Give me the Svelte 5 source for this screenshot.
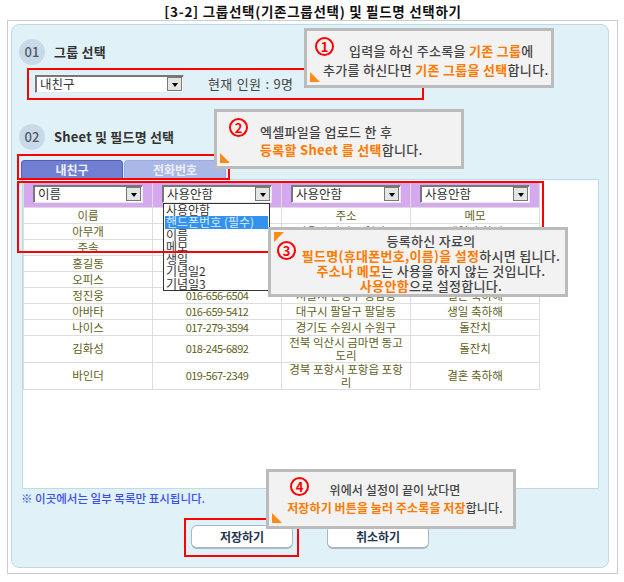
<script>
	const rows = [
		{ name: '이름', phone: '휴대폰번호', addr: '주소', memo: '메모' },
		{ name: '아무개', phone: '010-123-4567', addr: '서울시 강남구 역삼동', memo: '생일 축하해' },
		{ name: '주속', phone: '011-234-5678', addr: '서울시 서초구 서초동', memo: '돌잔치' },
		{ name: '홍길동', phone: '011-345-6789', addr: '부산시 해운대구 우동', memo: '결혼 축하해' },
		{ name: '오피스', phone: '016-456-7890', addr: '인천시 남동구 구월동', memo: '돌잔치' },
		{ name: '정진웅', phone: '016-656-6504', addr: '서울시 은평구 응암동', memo: '결혼 축하해' },
		{ name: '아바타', phone: '016-659-5412', addr: '대구시 팔달구 팔달동', memo: '생일 축하해' },
		{ name: '나이스', phone: '017-279-3594', addr: '경기도 수원시 수원구', memo: '돌잔치' },
		{ name: '김화성', phone: '018-245-6892', addr: '전북 익산시 금마면 동고도리', memo: '돌잔치' },
		{ name: '바인더', phone: '019-567-2349', addr: '경북 포항시 포항읍 포항리', memo: '결혼 축하해' }
	];

	const fields = ['이름', '사용안함', '사용안함', '사용안함'];
	const options = ['사용안함', '핸드폰번호 (필수)', '이름', '메모', '생일', '기념일2', '기념일3'];
</script>

{#snippet selectBox(label)}
	<div class="select">
		<span class="select-label">{label}</span>
		<span class="select-arrow"><i></i></span>
	</div>
{/snippet}

<div class="page">
	<h1 class="title">[3-2] 그룹선택(기존그룹선택) 및 필드명 선택하기</h1>

	<div class="frame">
		<div class="panel">
			<div class="heading">
				<span class="step">01</span>
				<span class="heading-text">그룹 선택</span>
			</div>
			<div class="group-row">
				<div class="group-select">{@render selectBox('내친구')}</div>
				<span class="count">현재 인원 : 9명</span>
			</div>

			<div class="heading second">
				<span class="step">02</span>
				<span class="heading-text">Sheet 및 필드명 선택</span>
			</div>
			<div class="tabs">
				<div class="tab active">내친구</div>
				<div class="tab">전화번호</div>
			</div>
			<div class="sheet">
				<table>
					<thead>
						<tr>
							{#each fields as field}
								<th>{@render selectBox(field)}</th>
							{/each}
						</tr>
					</thead>
					<tbody>
						{#each rows as row}
							<tr>
								<td>{row.name}</td>
								<td class="phone">{row.phone}</td>
								<td class="addr">{row.addr}</td>
								<td>{row.memo}</td>
							</tr>
						{/each}
					</tbody>
				</table>
			</div>
			<p class="note">※ 이곳에서는 일부 목록만 표시됩니다.</p>
			<div class="buttons">
				<button>저장하기</button>
				<button>취소하기</button>
			</div>
		</div>
	</div>

	<!-- dropdown opened over the table -->
	<ul class="dropdown">
		{#each options as option, i}
			<li class:selected={i === 1}>{option}</li>
		{/each}
	</ul>

	<!-- red highlight boxes -->
	<div class="mark mark1"></div>
	<div class="mark mark2"></div>
	<div class="mark mark3"></div>
	<div class="mark mark4"></div>

	<!-- callouts -->
	<div class="callout c1">
		<span class="num">1</span>
		<span class="corner"></span>
		<p class="l1">입력을 하신 주소록을 <b>기존 그룹</b>에</p>
		<p class="l2">추가를 하신다면 <b>기존 그룹을 선택</b>합니다.</p>
	</div>
	<div class="callout c2">
		<span class="num">2</span>
		<span class="corner"></span>
		<p>엑셀파일을 업로드 한 후</p>
		<p><b>등록할 Sheet 를 선택</b>합니다.</p>
	</div>
	<div class="callout c3">
		<span class="num">3</span>
		<span class="corner top"></span>
		<p>등록하신 자료의</p>
		<p><b>필드명(휴대폰번호,이름)을 설정</b>하시면 됩니다.</p>
		<p><b>주소나 메모</b>는 사용을 하지 않는 것입니다.</p>
		<p><b>사용안함</b>으로 설정합니다.</p>
	</div>
	<div class="callout c4">
		<span class="num">4</span>
		<span class="corner"></span>
		<p>위에서 설정이 끝이 났다면</p>
		<p><b>저장하기 버튼을 눌러 주소록을 저장</b>합니다.</p>
	</div>
</div>

<style>
	:global(body) {
		margin: 0;
		background: #fff;
	}

	.page {
		position: relative;
		width: 624px;
		height: 582px;
		overflow: hidden;
		font-family: 'Noto Sans CJK KR', 'Noto Sans', sans-serif;
		font-size: 12px;
		color: #444;
	}

	.title {
		margin: 0;
		height: 20px;
		padding-top: 3px;
		box-sizing: border-box;
		line-height: 17px;
		font-size: 13.5px;
		letter-spacing: 0.7px;
		font-weight: 700;
		color: #111;
		text-align: center;
		padding-left: 2px;
	}

	.frame {
		box-sizing: border-box;
		width: 611px;
		height: 554px;
		margin-left: 7px;
		padding: 3px 8px 5px 3px;
		border: 1px solid #ccc;
	}

	.panel {
		box-sizing: border-box;
		height: 100%;
		padding: 14px 9px 0 7px;
		background: #e0f1f7;
		border: 1px solid #b9dcea;
		border-radius: 8px;
	}

	.heading {
		display: flex;
		align-items: center;
		gap: 9px;
		height: 26px;
		font-size: 13px;
		letter-spacing: 0.2px;
		font-weight: 700;
		color: #333;
	}

	.heading.second {
		margin-top: 31px;
	}

	.heading-text {
		margin-top: -2px;
	}

	.step {
		width: 26px;
		height: 26px;
		border-radius: 50%;
		background: #c8dae7;
		color: #556;
		font-weight: 500;
		font-size: 13px;
		line-height: 26px;
		text-align: center;
	}

	.group-row {
		display: flex;
		align-items: center;
		gap: 24px;
		height: 19px;
		margin: 9px 0 0 16px;
		color: #444;
	}

	.count {
		font-size: 13px;
		letter-spacing: 0.3px;
		word-spacing: 1px;
	}

	.group-select {
		width: 149px;
	}

	.select {
		box-sizing: border-box;
		display: flex;
		justify-content: space-between;
		align-items: center;
		height: 18px;
		padding: 0 1px 0 3px;
		background: #fff;
		border: 1px solid #e8e8e8;
		border-top: 1px solid #777;
		border-left: 1px solid #777;
		box-shadow: inset 1px 1px 0 #777;
	}

	.select-label {
		font-size: 12.5px;
		line-height: 14px;
		font-weight: 400;
		color: #333;
		padding-left: 1px;
	}

	.select-arrow {
		box-sizing: border-box;
		display: flex;
		align-items: center;
		justify-content: center;
		width: 15px;
		height: 14px;
		background: #e4e6e6;
		border: 1px solid #777;
	}

	.select-arrow i {
		width: 0;
		height: 0;
		margin-top: 2px;
		border: 3.5px solid transparent;
		border-top: 4px solid #000;
		border-bottom: 0;
	}

	.tabs {
		display: flex;
		gap: 1px;
		height: 19px;
		margin: 10px 0 0 2px;
	}

	.tab {
		box-sizing: border-box;
		width: 102px;
		line-height: 18px;
		text-align: center;
		font-weight: 700;
		color: #eef0fb;
		background: #a9b8e6;
		border: 1px solid #9aaade;
		border-bottom: 0;
		border-radius: 4px 4px 0 0;
	}

	.tab.active {
		background: #707fd2;
		border-color: #4f5fb8;
	}

	.sheet {
		box-sizing: border-box;
		width: 577px;
		height: 310px;
		margin-left: 3px;
		padding-top: 2px;
		background: #fff;
		border: 1px solid #b9dcea;
	}

	table {
		table-layout: fixed;
		width: 517px;
		border-collapse: collapse;
		text-align: center;
		line-height: 13px;
		color: #5f5f22;
	}

	th {
		height: 25px;
		padding: 0 9px;
		background: #d5a8f0;
		border: 1px solid #ddd;
		border-top: 0;
		box-sizing: border-box;
	}

	td {
		height: 16px;
		padding: 0 5px;
		border: 1px solid #ddd;
		box-sizing: border-box;
		font-size: 11.5px;
	}

	td.phone {
		font-size: 11px;
		letter-spacing: -0.5px;
	}

	.note {
		margin: 2px 0 0 2px;
		line-height: 14px;
		font-size: 11.5px;
		font-weight: 500;
		color: #3b4ff0;
	}

	.buttons {
		display: flex;
		justify-content: center;
		gap: 34px;
		margin-top: 20px;
		padding-left: 2px;
	}

	button {
		box-sizing: border-box;
		width: 102px;
		height: 24px;
		padding: 0;
		font-family: inherit;
		font-size: 12px;
		font-weight: 700;
		color: #23344f;
		background: #fff;
		border: 1px solid #a8b6c8;
		border-bottom: 2px solid #a8b6c8;
		border-radius: 6px;
	}

	.dropdown {
		position: absolute;
		left: 163px;
		top: 203px;
		box-sizing: border-box;
		width: 107px;
		height: 88px;
		margin: 0;
		padding: 0 1px;
		list-style: none;
		background: #fff;
		border: 1px solid #333;
		font-size: 12px;
		line-height: 12.3px;
		color: #333;
	}

	.dropdown li {
		height: 12.3px;
		padding-left: 1px;
		white-space: nowrap;
	}

	.dropdown li.selected {
		background: #3392f0;
		color: #d8ecff;
	}

	.mark {
		position: absolute;
		box-sizing: border-box;
		border: 2px solid #f00;
	}

	.mark1 {
		left: 27px;
		top: 68px;
		width: 397px;
		height: 32px;
	}

	.mark2 {
		left: 17px;
		top: 154px;
		width: 213px;
		height: 26px;
	}

	.mark3 {
		left: 17px;
		top: 181px;
		width: 527px;
		height: 72px;
	}

	.mark4 {
		left: 184px;
		top: 518px;
		width: 115px;
		height: 39px;
	}

	.callout {
		position: absolute;
		box-sizing: border-box;
		width: 250px;
		height: 60px;
		background: #f2f2f2;
		border: 3px solid #bbb;
		font-size: 13px;
		letter-spacing: 0.3px;
		font-weight: 500;
		color: #444;
	}

	.callout p {
		margin: 0;
		white-space: nowrap;
	}

	.callout b {
		color: #ff7a00;
		font-weight: 700;
	}

	.num {
		position: absolute;
		box-sizing: border-box;
		width: 19px;
		height: 19px;
		border: 2px solid #f00;
		border-radius: 50%;
		color: #f00;
		font-size: 13px;
		font-weight: 700;
		line-height: 15px;
		text-align: center;
		letter-spacing: 0;
	}

	.corner {
		position: absolute;
		left: 3px;
		bottom: 3px;
		width: 0;
		height: 0;
		border-left: 10px solid #ff8a14;
		border-top: 10px solid transparent;
	}

	.corner.top {
		top: 2px;
		bottom: auto;
		border-top: 10px solid #ff8a14;
		border-left: 0;
		border-right: 10px solid transparent;
	}

	.c1 {
		left: 304px;
		top: 28px;
		line-height: 19px;
		padding-top: 10px;
	}

	.c1 .num {
		left: 8px;
		top: 6px;
	}

	.c1 .l1 {
		padding-left: 42px;
	}

	.c1 .l2 {
		padding-left: 16px;
	}

	.c2 {
		left: 214px;
		top: 109px;
		padding: 11px 0 0 43px;
		line-height: 18px;
	}

	.c2 .num {
		left: 12px;
		top: 6px;
	}

	.c3 {
		left: 268px;
		top: 227px;
		width: 300px;
		height: 70px;
		padding: 3px 0 0 26px;
		line-height: 15px;
		text-align: center;
	}

	.c3 .num {
		left: 6px;
		top: 11px;
	}

	.c4 {
		left: 266px;
		top: 469px;
		padding-top: 9px;
		padding-left: 8px;
		font-size: 12px;
		letter-spacing: 0.1px;
		line-height: 18px;
		text-align: center;
	}

	.c4 .num {
		left: 21px;
		top: 5px;
	}
</style>
